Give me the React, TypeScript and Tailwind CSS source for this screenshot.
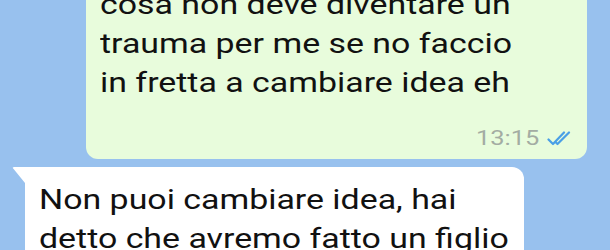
export default function App() {
  return (
    <div
      className="w-[610px] h-[250px] overflow-hidden bg-[#98c1ee] flex flex-col"
      style={{ fontFamily: 'Roboto, "Noto Sans", sans-serif' }}
    >
      <div className="flex justify-end pr-[23px] mt-[-24px]">
        <div className="w-[501px] bg-[#e8fcdc] rounded-b-[12px] pl-[14px] pr-[14px] pt-[9px] pb-[9px] flex flex-col">
          <div className="text-[28px] leading-[39px] text-[#111111] whitespace-nowrap origin-left scale-x-[1.21]">
            <div>cosa non deve diventare un</div>
            <div>trauma per me se no faccio</div>
            <div>in fretta a cambiare idea eh</div>
          </div>
          <div className="mt-[24px] flex items-center justify-end gap-[8px] pr-[1px]">
            <span className="text-[21px] leading-[24px] text-[#a3aca3] inline-block origin-right scale-x-[1.21]">13:15</span>
            <svg width="25" height="15" viewBox="0 0 25 15" fill="none" stroke="#4a9fe6" strokeWidth="2.2" strokeLinecap="round" strokeLinejoin="round">
              <path d="M1.5 8.5 L6 13 L17 1.5" />
              <path d="M9 11.5 L10.5 13 L22 1.5" />
            </svg>
          </div>
        </div>
      </div>
      <div className="flex mt-[8px] pl-[12px]">
        <svg width="13" height="16" viewBox="0 0 13 16" className="shrink-0">
          <path d="M13 0 L2 0 Q0 0 1.2 1.6 L13 16 Z" fill="#ffffff" />
        </svg>
        <div className="w-[499px] bg-white rounded-tr-[12px] pl-[14px] pr-[14px] pt-[13px] pb-[20px]">
          <div className="text-[28px] leading-[39px] text-[#111111] whitespace-nowrap origin-left scale-x-[1.21]">
            <div>Non puoi cambiare idea, hai</div>
            <div>detto che avremo fatto un figlio</div>
          </div>
        </div>
      </div>
    </div>
  );
}
